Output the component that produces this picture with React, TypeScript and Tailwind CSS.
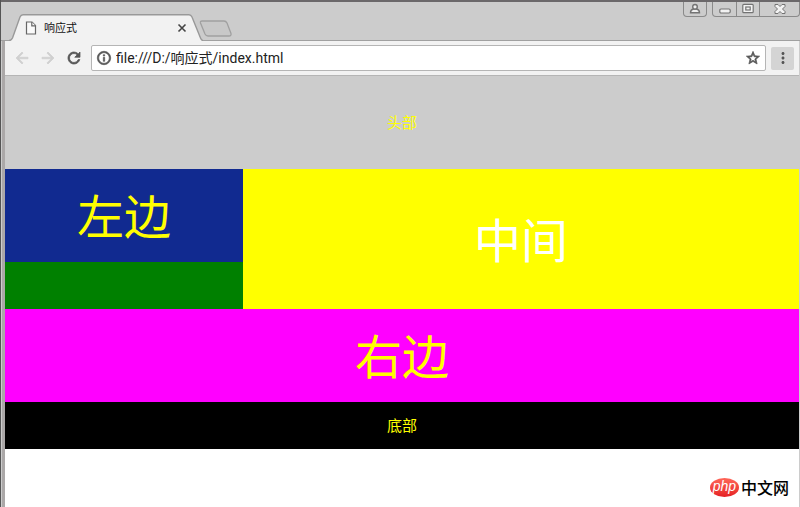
import React, { useState } from 'react';
import {
  MdArrowBack,
  MdArrowForward,
  MdInfoOutline,
  MdMoreVert,
  MdRefresh,
  MdStarBorder
} from 'react-icons/md';

function TabStrip() {
  return (
    <div className="flex h-[41px] items-start justify-between border-t-2 border-b border-t-[#6b686a] border-b-[#a0a0a0] bg-[#cccccc]">
      <div className="flex pl-2 pt-3">
        <div className="relative flex h-[27px] w-[194px] items-center pl-4 pr-4">
          <svg className="absolute inset-0" width="194" height="27" viewBox="0 0 194 27" aria-hidden="true">
            <path d="M0 27 C2 27 2.500 26 3.500 24 L11 3 Q12 .8 14 .8 H180 Q182 .8 183 3 L191.500 24 Q192.500 27 194 27 Z" fill="#f2f2f2" />
            <path d="M0 26.500 C2 26.500 2.500 26 3.500 24 L11 3 Q12 .8 14 .8 H180 Q182 .8 183 3 L191.500 24 Q192.500 26.500 194 26.500" fill="none" stroke="#999999" strokeWidth="1.400" />
          </svg>
          <button className="relative flex flex-1 items-center gap-[7px] text-[11px] text-[#111111]">
            <svg width="12" height="14" viewBox="0 0 12 14" fill="#fafafa" stroke="#666666" strokeWidth="1.200" aria-hidden="true">
              <path d="M1.500 1 H7 L10.500 4.500 V13 H1.500 Z" />
              <path d="M6.800 1 V4.800 H10.500" />
            </svg>
            响应式
          </button>
          <button aria-label="Close tab" className="relative text-[#444444]">
            <svg width="10" height="10" viewBox="0 0 10 10" stroke="currentColor" strokeWidth="1.600">
              <path d="M1.500 1.500 L8.500 8.500 M8.500 1.500 L1.500 8.500" />
            </svg>
          </button>
        </div>
        <button aria-label="New tab" className="mt-1 -ml-1 self-start">
          <svg width="36" height="20" viewBox="0 0 36 20" fill="#c8c8c8" stroke="#a0a0a0" strokeWidth="1.300">
            <path d="M1.500 5 Q1 3 3 3 H25 Q27 3 28 5 L32 15.500 Q32.500 18 30 18 H9 Q7 18 6 16 Z" />
          </svg>
        </button>
      </div>
      <WindowButtons />
    </div>
  );
}

function WindowButtons() {
  return (
    <div className="flex h-[15px] gap-[5px] text-[#737373]">
      <button aria-label="Profile" className="flex w-6 items-center justify-center rounded-b border border-t-0 border-[#8a8a8a]">
        <svg width="12" height="12" viewBox="0 0 12 12" fill="#eeeeee" stroke="currentColor" strokeWidth="1.400">
          <path d="M1.500 9.800 Q1.500 6.500 4.500 6 H7.500 Q10.500 6.500 10.500 9.800 Z" />
          <circle cx="6" cy="3.800" r="2.300" />
        </svg>
      </button>
      <div className="flex divide-x divide-[#8a8a8a] rounded-b border border-t-0 border-[#8a8a8a]">
        <button aria-label="Minimize" className="flex w-6 items-center justify-center">
          <svg width="12" height="12" viewBox="0 0 12 12" fill="#f2f2f2" stroke="currentColor" strokeWidth="1.200">
            <rect x=".8" y="6" width="10.400" height="4" rx="1.200" />
          </svg>
        </button>
        <button aria-label="Maximize" className="flex w-[23px] items-center justify-center">
          <svg width="12" height="12" viewBox="0 0 12 12" fill="#f2f2f2" stroke="currentColor" strokeWidth="1.200">
            <rect x=".8" y="1.300" width="10.400" height="8.400" rx="1" />
            <rect x="3.800" y="4" width="4.400" height="3" />
          </svg>
        </button>
        <button aria-label="Close" className="flex w-[39px] items-center justify-center">
          <svg width="12" height="12" viewBox="0 0 12 12" fill="#f2f2f2" stroke="currentColor" strokeWidth="1">
            <path d="M1 1.500 H4 L6 3.500 L8 1.500 H11 V3.500 L8.500 6 L11 8.500 V10.500 H8 L6 8.500 L4 10.500 H1 V8.500 L3.500 6 L1 3.500 Z" />
          </svg>
        </button>
      </div>
    </div>
  );
}

function Toolbar() {
  const [url, setUrl] = useState('file:///D:/响应式/index.html');

  return (
    <div className="flex h-[34px] items-center bg-[#f2f2f2] pl-2 pr-[5px] text-[#555555] [&_path:first-child]:stroke-none">
      <div className="flex gap-2">
        <button aria-label="Back" className="text-[#d0d0d0]"><MdArrowBack size={18} stroke="currentColor" strokeWidth={1} /></button>
        <button aria-label="Forward" className="text-[#d0d0d0]"><MdArrowForward size={18} stroke="currentColor" strokeWidth={1} /></button>
        <button aria-label="Reload"><MdRefresh size={18} stroke="currentColor" strokeWidth={1} /></button>
      </div>
      <div className="ml-2 flex h-[26px] min-w-0 flex-1 items-center rounded-xs border border-[#b5b5b5] bg-white px-1">
        <MdInfoOutline size={16} stroke="currentColor" strokeWidth={1} className="shrink-0" />
        <input
          aria-label="Address"
          value={url}
          onChange={(e) => setUrl(e.target.value)}
          className="ml-1 min-w-0 flex-1 bg-transparent font-[Roboto,'Noto_Sans_CJK_SC',sans-serif] text-[14px] text-[#222222] outline-none"
        />
        <button aria-label="Bookmark"><MdStarBorder size={16} stroke="currentColor" strokeWidth={1} /></button>
      </div>
      <button aria-label="Menu" className="ml-[5px] flex h-[23px] w-[23px] items-center justify-center rounded-xs bg-[#d4d4d4]">
        <MdMoreVert size={18} />
      </button>
    </div>
  );
}

function SiteLogo() {
  return (
    <a href="#" className="flex items-center gap-[2px] text-black">
      <span className="flex h-[19px] w-[29px] items-center justify-center rounded-[50%] bg-linear-to-b from-[#ff6558] to-[#e51c23] pb-[2px] font-['Liberation_Sans',sans-serif] text-[14px] leading-none italic text-white">
        php
      </span>
      <span className="text-[16px] leading-6 font-medium">中文网</span>
    </a>
  );
}

export default function App() {
  return (
    <div className="flex min-h-screen flex-col border-l border-[#555555] bg-[#cccccc] font-['Noto_Sans_CJK_SC',sans-serif]">
      <TabStrip />
      <div className="ml-px flex flex-1 flex-col border-r border-l-3 border-r-[#cccccc] border-l-[#aba8a8] bg-white">
        <Toolbar />
        <header className="flex h-[94px] items-center justify-center border-t border-[#b5b5b5] bg-[#cccccc] text-[15px] text-[#ffff00]">
          头部
        </header>
        <main className="text-[47px] leading-none text-[#ffff00]">
          <div className="flex h-[140px]">
            <div className="w-[30%] bg-[#008000]">
              <aside className="flex h-[93px] items-center justify-center bg-[#112a90] pb-1">左边</aside>
            </div>
            <section className="flex flex-1 items-center justify-center bg-[#ffff00] pb-1 text-white">中间</section>
          </div>
          <aside className="flex h-[93px] items-center justify-center bg-[#ff00ff] pb-1">右边</aside>
        </main>
        <footer className="flex h-[47px] items-center justify-center bg-black text-[15px] text-[#ffff00]">底部</footer>
        <div className="mt-auto flex justify-end pr-[10px] pb-2">
          <SiteLogo />
        </div>
      </div>
    </div>
  );
}
